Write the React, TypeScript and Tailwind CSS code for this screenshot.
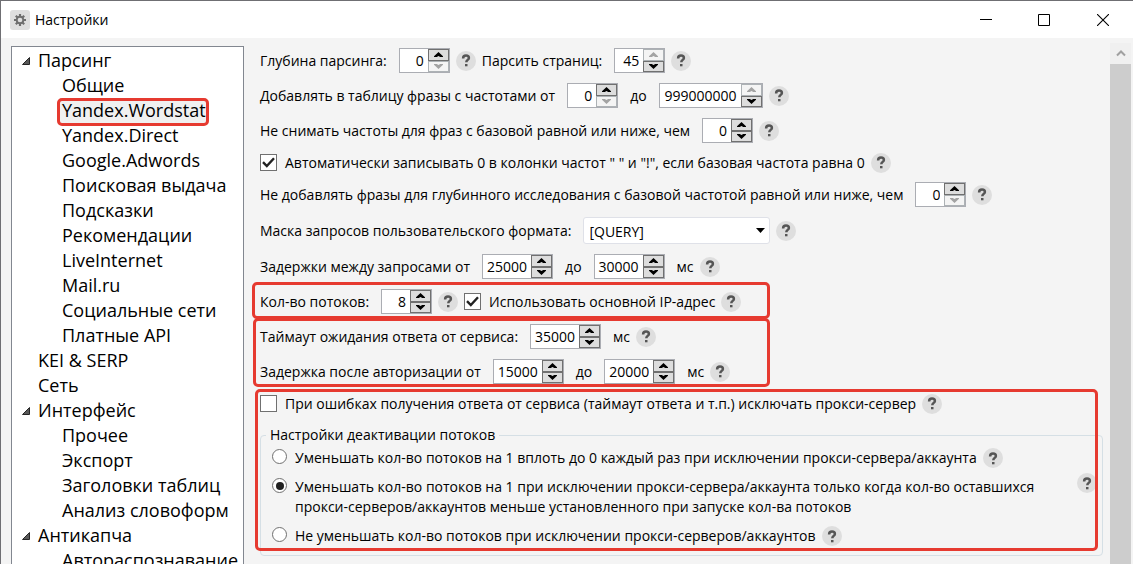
import { useState, type ReactNode } from "react";

const tree: { label: string; children?: string[] }[] = [
  {
    label: "Парсинг",
    children: [
      "Общие",
      "Yandex.Wordstat",
      "Yandex.Direct",
      "Google.Adwords",
      "Поисковая выдача",
      "Подсказки",
      "Рекомендации",
      "LiveInternet",
      "Mail.ru",
      "Социальные сети",
      "Платные API",
    ],
  },
  { label: "KEI & SERP" },
  { label: "Сеть" },
  { label: "Интерфейс", children: ["Прочее", "Экспорт", "Заголовки таблиц", "Анализ словоформ"] },
  { label: "Антикапча", children: ["Автораспознавание"] },
];

function Gear() {
  return (
    <span className="flex size-5 items-center justify-center rounded-[3px] bg-[#dedede]">
      <svg viewBox="0 0 14 14" className="size-[14px]" aria-hidden="true">
        <g stroke="#6e6e6e" strokeWidth="2.2">
          <path d="M7 1v12M1 7h12M2.8 2.8l8.4 8.4M11.2 2.8l-8.4 8.4" />
        </g>
        <circle cx="7" cy="7" r="3.3" fill="#dedede" stroke="#6e6e6e" strokeWidth="1.9" />
      </svg>
    </span>
  );
}

function Help({ className = "" }: { className?: string }) {
  return (
    <button
      type="button"
      aria-label="Справка"
      className={`flex size-5 shrink-0 items-center justify-center rounded-full bg-[#dedede] ${className}`}
    >
      <svg viewBox="0 0 10 13" className="h-[13px] w-2.5" fill="none" aria-hidden="true">
        <path d="M2.1 4.4C2.1 2.4 3.3 1.6 5 1.6s2.9.8 2.9 2.3c0 2-2.6 2-2.6 4.3" stroke="#555" strokeWidth="2.5" />
        <path d="M4 10h2.5v2.3H4z" fill="#555" />
      </svg>
    </button>
  );
}

function StepButton({ up, disabled, onClick }: { up?: boolean; disabled?: boolean; onClick: () => void }) {
  return (
    <button
      type="button"
      aria-label={up ? "Увеличить" : "Уменьшить"}
      disabled={disabled}
      onClick={onClick}
      className="flex w-[21px] flex-1 items-center justify-center border border-[#707070] bg-[#dddddd] text-black disabled:border-[#adb2b5] disabled:bg-[#f4f4f4] disabled:text-[#a3a3a3]"
    >
      <svg viewBox="0 0 9 5" className="h-[5px] w-[9px]" fill="currentColor" aria-hidden="true">
        {up ? <path d="M4.5 0 9 4.2V5H6.2L4.5 4 2.8 5H0v-.8z" /> : <path d="M4.5 5 9 .8V0H6.2L4.5 1 2.8 0H0v.8z" />}
      </svg>
    </button>
  );
}

type SpinnerProps = { label: string; value: number; min?: number; max?: number; width?: string };

function Spinner({ label, value, min = -1, max = Infinity, width = "w-[51px]" }: SpinnerProps) {
  const [n, setN] = useState(value);
  return (
    <span className={`flex h-[25px] shrink-0 border border-[#abadb3] bg-white ${width}`}>
      <input
        aria-label={label}
        value={n}
        onChange={(e) => setN(Number(e.target.value) || 0)}
        className="w-0 min-w-0 flex-1 bg-transparent pr-1 pt-px text-right outline-none"
      />
      <span className="flex flex-col">
        <StepButton up disabled={n >= max} onClick={() => setN(n + 1)} />
        <StepButton disabled={n <= min} onClick={() => setN(n - 1)} />
      </span>
    </span>
  );
}

function Check({ children, checked }: { children: ReactNode; checked?: boolean }) {
  return (
    <label className="flex items-center gap-2">
      <span className="grid size-[17px] shrink-0 place-items-center">
        <input
          type="checkbox"
          defaultChecked={checked}
          className="peer col-start-1 row-start-1 size-[17px] appearance-none border border-[#707070] bg-white"
        />
        <svg
          viewBox="0 0 13 11"
          className="pointer-events-none invisible col-start-1 row-start-1 h-[11px] w-[13px] peer-checked:visible"
          fill="none"
          aria-hidden="true"
        >
          <path d="M1 5.2 4.8 9 12 1.2" stroke="#212121" strokeWidth="2.4" />
        </svg>
      </span>
      {children}
    </label>
  );
}

function Radio({ children, checked }: { children: ReactNode; checked?: boolean }) {
  return (
    <label className="flex items-start gap-2">
      <input
        type="radio"
        name="deactivation"
        defaultChecked={checked}
        className="mt-px grid size-[15px] shrink-0 appearance-none place-items-center rounded-full border border-[#707070] bg-white before:size-2 before:rounded-full checked:before:bg-[#212121]"
      />
      <span>{children}</span>
    </label>
  );
}

function Row({ children, className = "h-[25px]" }: { children: ReactNode; className?: string }) {
  return <div className={`flex items-center whitespace-nowrap ${className}`}>{children}</div>;
}

function Frame({ className }: { className: string }) {
  return <div className={`pointer-events-none absolute rounded-[5px] border-3 border-[#e63a30] ${className}`} />;
}

function TitleBar() {
  return (
    <header className="flex h-[37px] shrink-0 items-center bg-white pl-[9px]">
      <Gear />
      <h1 className="ml-[5px] flex-1 text-[14px]">Настройки</h1>
      <button type="button" aria-label="Свернуть" className="flex w-[58px] justify-center">
        <svg viewBox="0 0 12 12" className="size-3" aria-hidden="true">
          <path d="M0 5.5h12" stroke="#000" />
        </svg>
      </button>
      <button type="button" aria-label="Развернуть" className="flex w-[58px] justify-center">
        <svg viewBox="0 0 12 12" className="size-3" fill="none" aria-hidden="true">
          <path d="M.5.5h11v11H.5z" stroke="#000" />
        </svg>
      </button>
      <button type="button" aria-label="Закрыть" className="flex w-[60px] justify-center">
        <svg viewBox="0 0 12 12" className="size-3" aria-hidden="true">
          <path d="m0 0 12 12M12 0 0 12" stroke="#000" strokeWidth="1.1" />
        </svg>
      </button>
    </header>
  );
}

function Sidebar() {
  return (
    <nav className="w-[233px] shrink-0 overflow-hidden border border-b-0 border-[#828790] bg-white pt-px text-[18px] leading-[25px]">
      <ul>
        {tree.map((group) => (
          <li key={group.label}>
            <a href="#" className="flex items-center pl-[10px]">
              <svg viewBox="0 0 8 8" className="mr-2 size-2" aria-hidden="true">
                {group.children && <path d="M7.5.5v7h-7z" fill="#595959" stroke="#262626" />}
              </svg>
              {group.label}
            </a>
            <ul>
              {group.children?.map((item) => (
                <li key={item} className="pl-[48px]">
                  {item === "Yandex.Wordstat" ? (
                    <a href="#" aria-current="page" className="relative block w-fit bg-[#f0f0f0] pl-[2px]">
                      {item}
                      <Frame className="-bottom-[3px] -left-[3px] -right-[3px] top-0" />
                    </a>
                  ) : (
                    <a href="#" className="block pl-[2px] whitespace-nowrap">
                      {item}
                    </a>
                  )}
                </li>
              ))}
            </ul>
          </li>
        ))}
      </ul>
    </nav>
  );
}

export default function App() {
  return (
    <div className="flex h-screen flex-col overflow-hidden border-l border-t border-[#6f6f73] bg-[#f4f4f4] font-['Open_Sans','Noto_Sans',sans-serif] text-[14px] leading-5 text-black">
      <TitleBar />
      <div className="flex min-h-0 flex-1 pl-[10px]">
        <div className="flex pt-2">
          <Sidebar />
        </div>
        <main className="flex min-w-0 flex-1 flex-col gap-[10px] overflow-hidden pl-4 pr-[7px] pt-[10px]">
          <Row>
            Глубина парсинга:
            <span className="w-3" />
            <Spinner label="Глубина парсинга" value={0} min={0} />
            <Help className="mx-[6px]" />
            Парсить страниц:
            <span className="w-3" />
            <Spinner label="Парсить страниц" value={45} max={45} />
            <Help className="ml-[6px]" />
          </Row>
          <Row>
            Добавлять в таблицу фразы с частотами от
            <span className="w-3" />
            <Spinner label="Частота от" value={0} min={0} />
            <span className="mx-3">до</span>
            <Spinner label="Частота до" value={999000000} max={999000000} width="w-[104px]" />
            <Help className="ml-[6px]" />
          </Row>
          <Row>
            Не снимать частоты для фраз с базовой равной или ниже, чем
            <span className="w-3" />
            <Spinner label="Базовая частота" value={0} />
            <Help className="ml-[6px]" />
          </Row>
          <Row className="h-[19px]">
            <Check checked>Автоматически записывать 0 в колонки частот " " и "!", если базовая частота равна 0</Check>
            <Help className="ml-[6px]" />
          </Row>
          <Row>
            Не добавлять фразы для глубинного исследования с базовой частотой равной или ниже, чем
            <span className="w-3" />
            <Spinner label="Базовая частота для глубинного исследования" value={0} min={0} />
            <Help className="ml-[6px]" />
          </Row>
          <Row className="h-[27px]">
            <label htmlFor="mask">Маска запросов пользовательского формата:</label>
            <span className="relative ml-3 flex h-[27px] w-[187px] items-center">
              <select
                id="mask"
                className="h-full w-full appearance-none rounded-[3px] border border-[#dfe1e8] bg-white pl-[5px] pt-[2px]"
              >
                <option>[QUERY]</option>
              </select>
              <svg viewBox="0 0 9 5" className="pointer-events-none absolute right-[5px] h-[5px] w-[9px]" aria-hidden="true">
                <path d="M0 0h9L4.5 5z" />
              </svg>
            </span>
            <Help className="ml-[6px]" />
          </Row>
          <Row>
            Задержки между запросами от
            <span className="w-3" />
            <Spinner label="Задержка от" value={25000} width="w-[71px]" />
            <span className="mx-3">до</span>
            <Spinner label="Задержка до" value={30000} width="w-[71px]" />
            <span className="ml-3">мс</span>
            <Help className="ml-[6px]" />
          </Row>
          <div className="relative">
            <Row>
              Кол-во потоков:
              <span className="w-3" />
              <Spinner label="Кол-во потоков" value={8} />
              <Help className="mx-[6px]" />
              <Check checked>Использовать основной IP-адрес</Check>
              <Help className="ml-[6px]" />
            </Row>
            <Frame className="-bottom-[5px] -left-2 -top-[7px] w-[518px]" />
          </div>
          <div className="relative flex flex-col gap-[10px]">
            <Row>
              Таймаут ожидания ответа от сервиса:
              <span className="w-3" />
              <Spinner label="Таймаут ожидания" value={35000} width="w-[71px]" />
              <span className="ml-3">мс</span>
              <Help className="ml-[6px]" />
            </Row>
            <Row>
              Задержка после авторизации от
              <span className="w-3" />
              <Spinner label="Задержка после авторизации от" value={15000} width="w-[71px]" />
              <span className="mx-3">до</span>
              <Spinner label="Задержка после авторизации до" value={20000} width="w-[71px]" />
              <span className="ml-3">мс</span>
              <Help className="ml-[6px]" />
            </Row>
            <Frame className="-bottom-[3px] -left-[7px] -top-[6px] w-[517px]" />
          </div>
          <div className="relative">
            <Row className="h-[19px]">
              <Check>При ошибках получения ответа от сервиса (таймаут ответа и т.п.) исключать прокси-сервер</Check>
              <Help className="ml-[6px]" />
            </Row>
            <fieldset className="mt-[10px] rounded-[4px] border border-[#d5dfe5] px-[11px] pb-[9px] pt-px">
              <legend className="-ml-[6px] px-[4px] leading-6">Настройки деактивации потоков</legend>
              <div className="flex flex-col gap-[9px]">
                <Row className="h-5 gap-[6px]">
                  <Radio>Уменьшать кол-во потоков на 1 вплоть до 0 каждый раз при исключении прокси-сервера/аккаунта</Radio>
                  <Help />
                </Row>
                <div className="flex items-start justify-between">
                  <Radio checked>
                    Уменьшать кол-во потоков на 1 при исключении прокси-сервера/аккаунта только когда кол-во оставшихся
                    <br />
                    прокси-серверов/аккаунтов меньше установленного при запуске кол-ва потоков
                  </Radio>
                  <Help className="-mr-[6px] -mt-1" />
                </div>
                <Row className="h-5 gap-[6px]">
                  <Radio>Не уменьшать кол-во потоков при исключении прокси-серверов/аккаунтов</Radio>
                  <Help />
                </Row>
              </div>
            </fieldset>
            <Frame className="-left-[5px] -top-[5px] bottom-[5px] right-[5px]" />
          </div>
        </main>
        <div className="mr-[2px] flex w-[21px] shrink-0 flex-col pt-[5px]">
          <button type="button" aria-label="Прокрутить вверх" className="flex h-[21px] shrink-0 items-center justify-center bg-[#f0f0f0]">
            <svg viewBox="0 0 10 7" className="h-[7px] w-[10px]" fill="none" aria-hidden="true">
              <path d="m1 5.5 4-4 4 4" stroke="#a0a0a0" strokeWidth="2" />
            </svg>
          </button>
          <div className="flex-1 bg-[#cdcdcd]" />
        </div>
      </div>
    </div>
  );
}
